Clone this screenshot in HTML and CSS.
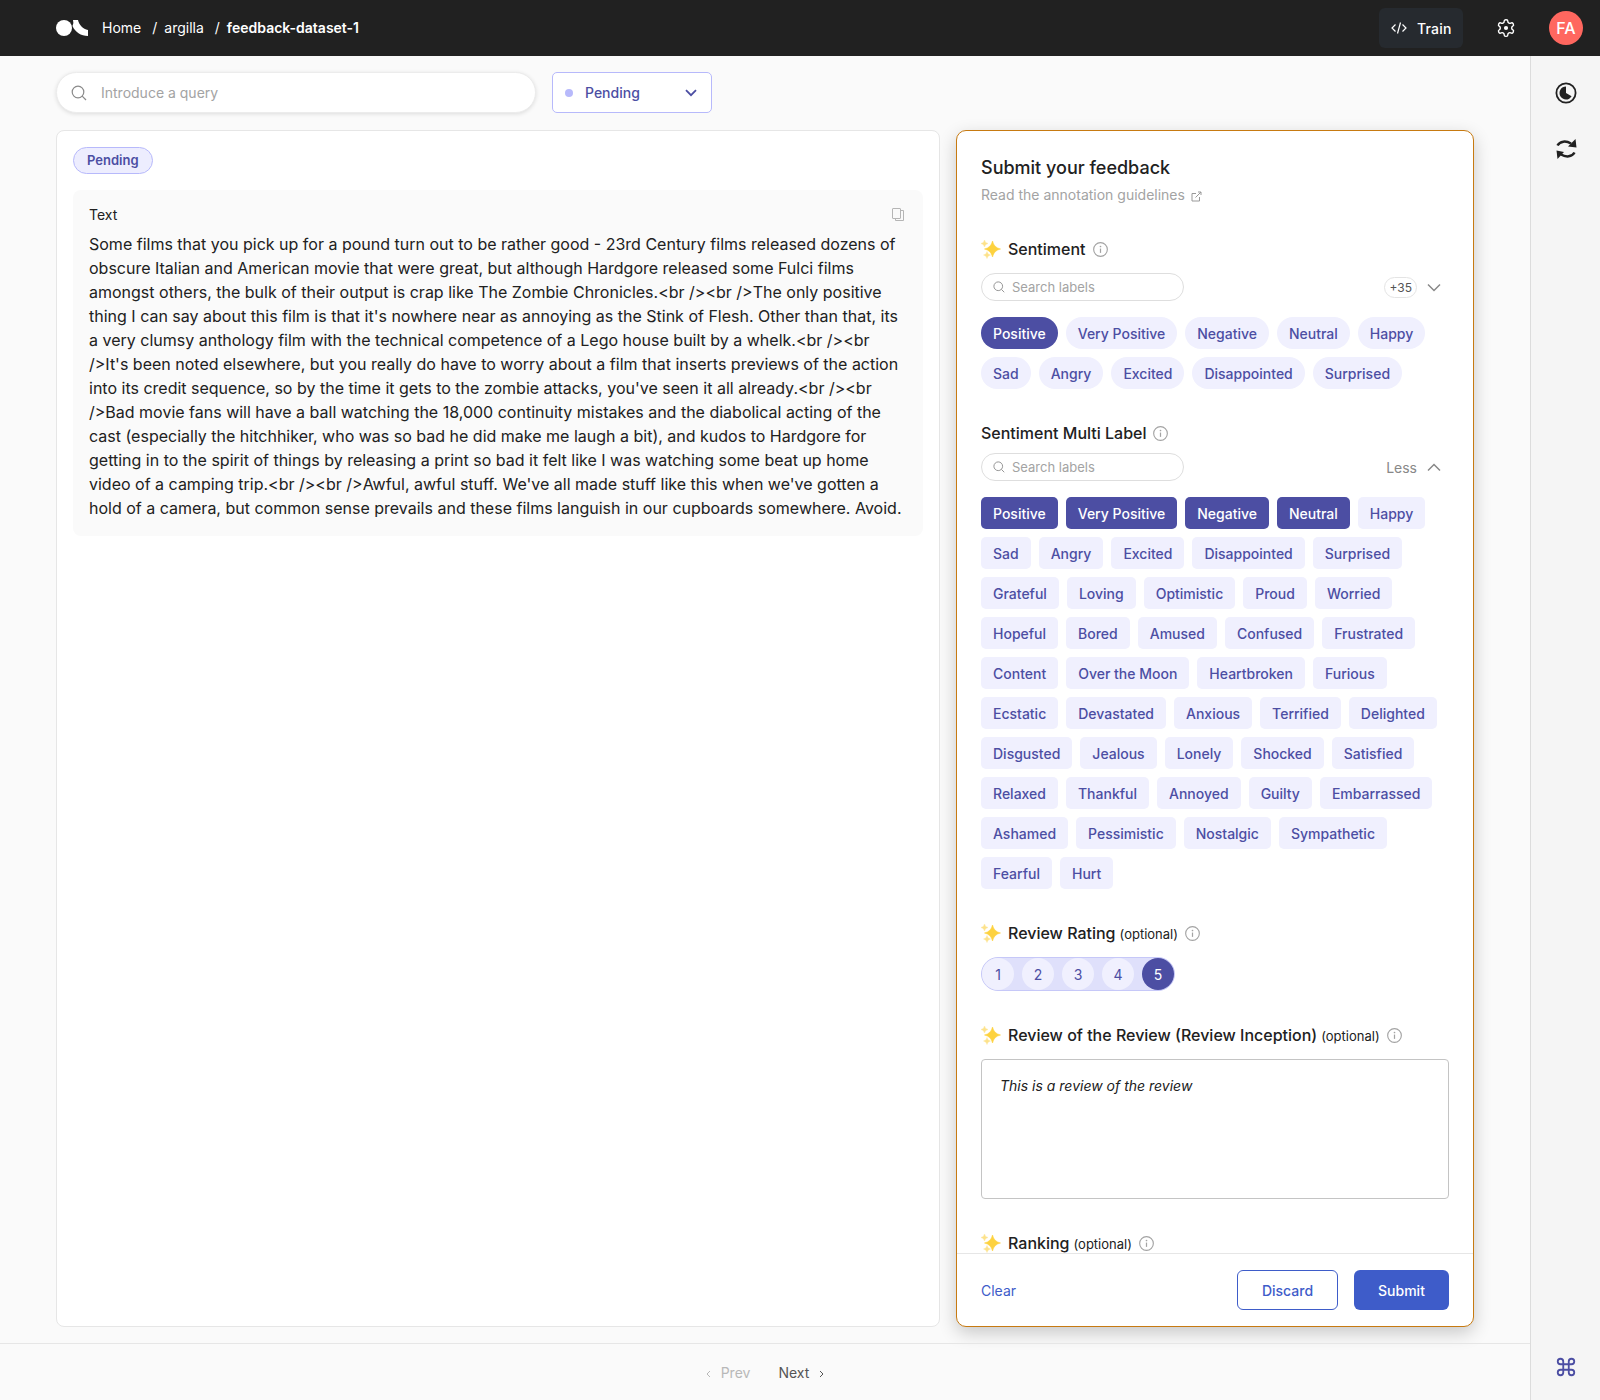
FILE: index.html
```html
<!DOCTYPE html>
<html lang="en">
<head>
    <meta charset="UTF-8">
    <title>feedback-dataset-1</title>
    <link rel="stylesheet" href="styles.css">
</head>
<body>
    <svg class="defs" width="0" height="0">
        <defs>
            <symbol id="sparkle" viewBox="0 0 20 20">
                <path d="M11.500 2Q12.900 8.600 19.500 10Q12.900 11.400 11.500 18Q10.100 11.400 3.500 10Q10.100 8.600 11.500 2z" fill="#fdd23f" stroke="#fdd23f" stroke-width=".6"/>
                <path d="M3.500 1Q4 4 7 4.500Q4 5 3.500 8Q3 5 0 4.500Q3 4 3.500 1z" fill="#fde28a" stroke="#fde28a" stroke-width=".4"/>
                <path d="M6 12.500Q6.500 15.500 9.500 16Q6.500 16.500 6 19.500Q5.500 16.500 2.500 16Q5.500 15.500 6 12.500z" fill="#fde28a" stroke="#fde28a" stroke-width=".4"/>
            </symbol>
            <symbol id="info" viewBox="0 0 16 16">
                <circle cx="8" cy="8" r="7.300" fill="none" stroke="currentColor" stroke-width="1.200"/>
                <path d="M8 7v4.600" stroke="currentColor" stroke-width="1.300"/>
                <circle cx="8" cy="4.800" r=".9" fill="currentColor"/>
            </symbol>
            <symbol id="search" viewBox="0 0 16 16">
                <circle cx="7" cy="7" r="5.800" fill="none" stroke="currentColor" stroke-width="1.200"/>
                <path d="M11.200 11.200l3.800 3.800" stroke="currentColor" stroke-width="1.200"/>
            </symbol>
        </defs>
    </svg>

    <div class="app">
        <header class="topbar">
            <svg class="logo" width="32" height="16" viewBox="0 0 32 16">
                <circle cx="8" cy="8" r="8" fill="#fff"/>
                <path d="M17 0h5C23 5 27 9 32 10V16C25 16 19 12 16.500 6Q18 3 17 0z" fill="#fff"/>
            </svg>
            <nav class="crumbs">
                <span>Home</span>
                <span class="crumb-sep">/</span>
                <span>argilla</span>
                <span class="crumb-sep">/</span>
                <strong>feedback-dataset-1</strong>
            </nav>
            <div class="topbar-right">
                <button class="train-btn">
                    <svg width="16" height="16" viewBox="0 0 16 16" fill="none" stroke="#fff" stroke-width="1.200">
                        <path d="M4.500 4.500L1 8l3.500 3.500M11.500 4.500L15 8l-3.500 3.500M9.500 2.500l-3 11"/>
                    </svg>
                    Train
                </button>
                <svg class="gear" width="20" height="20" viewBox="0 0 24 24" fill="none" stroke="#fff" stroke-width="1.700">
                    <path d="M12.220 2h-.44a2 2 0 0 0-2 2v.18a2 2 0 0 1-1 1.730l-.43.25a2 2 0 0 1-2 0l-.15-.08a2 2 0 0 0-2.730.73l-.22.38a2 2 0 0 0 .73 2.730l.15.1a2 2 0 0 1 1 1.720v.51a2 2 0 0 1-1 1.740l-.15.09a2 2 0 0 0-.73 2.730l.22.38a2 2 0 0 0 2.730.73l.15-.08a2 2 0 0 1 2 0l.43.25a2 2 0 0 1 1 1.730V20a2 2 0 0 0 2 2h.44a2 2 0 0 0 2-2v-.18a2 2 0 0 1 1-1.730l.43-.25a2 2 0 0 1 2 0l.15.08a2 2 0 0 0 2.730-.73l.22-.39a2 2 0 0 0-.73-2.730l-.15-.08a2 2 0 0 1-1-1.740v-.5a2 2 0 0 1 1-1.740l.15-.09a2 2 0 0 0 .73-2.730l-.22-.38a2 2 0 0 0-2.730-.73l-.15.08a2 2 0 0 1-2 0l-.43-.25a2 2 0 0 1-1-1.730V4a2 2 0 0 0-2-2z"/>
                    <circle cx="12" cy="12" r="2.500" fill="#fff" stroke="none"/>
                </svg>
                <div class="avatar">FA</div>
            </div>
        </header>

        <div class="workspace">
            <main class="main">
                <div class="toolbar">
                    <div class="query">
                        <svg class="query-icon" width="16" height="16"><use href="#search"/></svg>
                        <span>Introduce a query</span>
                    </div>
                    <div class="status-select">
                        <span class="status-dot"></span>
                        <span class="status-name">Pending</span>
                        <svg width="12" height="8" viewBox="0 0 12 8" fill="none" stroke="#4c4ea3" stroke-width="1.800"><path d="M1 1.200l5 5 5-5"/></svg>
                    </div>
                </div>

                <div class="content">
                    <section class="record">
                        <span class="badge">Pending</span>
                        <div class="field">
                            <div class="field-head">
                                <span>Text</span>
                                <svg width="14" height="15" viewBox="0 0 14 15" fill="none" stroke="#b5b5b5" stroke-width="1">
                                    <rect x="1.500" y="1.500" width="8" height="10" rx=".5"/>
                                    <path d="M10 3.500h2.500v10h-8v-2"/>
                                </svg>
                            </div>
                            <p class="field-text">Some films that you pick up for a pound turn out to be rather good - 23rd Century films released dozens of obscure Italian and American movie that were great, but although Hardgore released some Fulci films amongst others, the bulk of their output is crap like The Zombie Chronicles.&lt;br /&gt;&lt;br /&gt;The only positive thing I can say about this film is that it's nowhere near as annoying as the Stink of Flesh. Other than that, its a very clumsy anthology film with the technical competence of a Lego house built by a whelk.&lt;br /&gt;&lt;br /&gt;It's been noted elsewhere, but you really do have to worry about a film that inserts previews of the action into its credit sequence, so by the time it gets to the zombie attacks, you've seen it all already.&lt;br /&gt;&lt;br /&gt;Bad movie fans will have a ball watching the 18,000 continuity mistakes and the diabolical acting of the cast (especially the hitchhiker, who was so bad he did make me laugh a bit), and kudos to Hardgore for getting in to the spirit of things by releasing a print so bad it felt like I was watching some beat up home video of a camping trip.&lt;br /&gt;&lt;br /&gt;Awful, awful stuff. We've all made stuff like this when we've gotten a hold of a camera, but common sense prevails and these films languish in our cupboards somewhere. Avoid.</p>
                        </div>
                    </section>

                    <aside class="feedback">
                        <div class="feedback-scroll">
                            <h2>Submit your feedback</h2>
                            <p class="guidelines">
                                Read the annotation guidelines
                                <svg width="11" height="11" viewBox="0 0 11 11" fill="none" stroke="#999" stroke-width="1"><path d="M5 2.500H1v7.500h7.500V6M4.500 6.500L10 1M7 1h3v3"/></svg>
                            </p>

                            <div class="question">
                                <div class="q-title">
                                    <svg class="spark" width="20" height="20"><use href="#sparkle"/></svg>
                                    <span>Sentiment</span>
                                    <svg class="q-info" width="15" height="15"><use href="#info"/></svg>
                                </div>
                                <div class="q-search">
                                    <div class="label-search">
                                        <svg width="12" height="12"><use href="#search"/></svg>
                                        <span>Search labels</span>
                                    </div>
                                    <div class="q-toggle">
                                        <span class="more-count">+35</span>
                                        <svg width="14" height="9" viewBox="0 0 14 9" fill="none" stroke="#888" stroke-width="1.500"><path d="M1 1.500l6 6 6-6"/></svg>
                                    </div>
                                </div>
                                <div class="chips">
                                    <span class="chip chip-on">Positive</span>
                                    <span class="chip">Very Positive</span>
                                    <span class="chip">Negative</span>
                                    <span class="chip">Neutral</span>
                                    <span class="chip">Happy</span>
                                    <span class="chip">Sad</span>
                                    <span class="chip">Angry</span>
                                    <span class="chip">Excited</span>
                                    <span class="chip">Disappointed</span>
                                    <span class="chip">Surprised</span>
                                </div>
                            </div>

                            <div class="question">
                                <div class="q-title q-title-plain">
                                    <span>Sentiment Multi Label</span>
                                    <svg class="q-info" width="15" height="15"><use href="#info"/></svg>
                                </div>
                                <div class="q-search">
                                    <div class="label-search">
                                        <svg width="12" height="12"><use href="#search"/></svg>
                                        <span>Search labels</span>
                                    </div>
                                    <div class="q-toggle">
                                        <span class="less">Less</span>
                                        <svg width="14" height="9" viewBox="0 0 14 9" fill="none" stroke="#888" stroke-width="1.500"><path d="M1 7.500l6-6 6 6"/></svg>
                                    </div>
                                </div>
                                <div class="chips chips-square">
                                    <span class="chip chip-on">Positive</span>
                                    <span class="chip chip-on">Very Positive</span>
                                    <span class="chip chip-on">Negative</span>
                                    <span class="chip chip-on">Neutral</span>
                                    <span class="chip">Happy</span>
                                    <span class="chip">Sad</span>
                                    <span class="chip">Angry</span>
                                    <span class="chip">Excited</span>
                                    <span class="chip">Disappointed</span>
                                    <span class="chip">Surprised</span>
                                    <span class="chip">Grateful</span>
                                    <span class="chip">Loving</span>
                                    <span class="chip">Optimistic</span>
                                    <span class="chip">Proud</span>
                                    <span class="chip">Worried</span>
                                    <span class="chip">Hopeful</span>
                                    <span class="chip">Bored</span>
                                    <span class="chip">Amused</span>
                                    <span class="chip">Confused</span>
                                    <span class="chip">Frustrated</span>
                                    <span class="chip">Content</span>
                                    <span class="chip">Over the Moon</span>
                                    <span class="chip">Heartbroken</span>
                                    <span class="chip">Furious</span>
                                    <span class="chip">Ecstatic</span>
                                    <span class="chip">Devastated</span>
                                    <span class="chip">Anxious</span>
                                    <span class="chip">Terrified</span>
                                    <span class="chip">Delighted</span>
                                    <span class="chip">Disgusted</span>
                                    <span class="chip">Jealous</span>
                                    <span class="chip">Lonely</span>
                                    <span class="chip">Shocked</span>
                                    <span class="chip">Satisfied</span>
                                    <span class="chip">Relaxed</span>
                                    <span class="chip">Thankful</span>
                                    <span class="chip">Annoyed</span>
                                    <span class="chip">Guilty</span>
                                    <span class="chip">Embarrassed</span>
                                    <span class="chip">Ashamed</span>
                                    <span class="chip">Pessimistic</span>
                                    <span class="chip">Nostalgic</span>
                                    <span class="chip">Sympathetic</span>
                                    <span class="chip">Fearful</span>
                                    <span class="chip">Hurt</span>
                                </div>
                            </div>

                            <div class="question">
                                <div class="q-title">
                                    <svg class="spark" width="20" height="20"><use href="#sparkle"/></svg>
                                    <span>Review Rating</span>
                                    <small>(optional)</small>
                                    <svg class="q-info" width="15" height="15"><use href="#info"/></svg>
                                </div>
                                <div class="rating">
                                    <span class="rate">1</span>
                                    <span class="rate">2</span>
                                    <span class="rate">3</span>
                                    <span class="rate">4</span>
                                    <span class="rate rate-on">5</span>
                                </div>
                            </div>

                            <div class="question">
                                <div class="q-title">
                                    <svg class="spark" width="20" height="20"><use href="#sparkle"/></svg>
                                    <span>Review of the Review (Review Inception)</span>
                                    <small>(optional)</small>
                                    <svg class="q-info" width="15" height="15"><use href="#info"/></svg>
                                </div>
                                <div class="review-box">This is a review of the review</div>
                            </div>

                            <div class="question">
                                <div class="q-title">
                                    <svg class="spark" width="20" height="20"><use href="#sparkle"/></svg>
                                    <span>Ranking</span>
                                    <small>(optional)</small>
                                    <svg class="q-info" width="15" height="15"><use href="#info"/></svg>
                                </div>
                            </div>
                        </div>
                        <div class="feedback-foot">
                            <span class="clear">Clear</span>
                            <div class="foot-actions">
                                <button class="btn btn-outline">Discard</button>
                                <button class="btn btn-solid">Submit</button>
                            </div>
                        </div>
                    </aside>
                </div>

                <footer class="pager">
                    <span class="pager-prev">
                        <svg width="5" height="8" viewBox="0 0 5 8" fill="none" stroke="currentColor"><path d="M4 1L1 4l3 3"/></svg>
                        Prev
                    </span>
                    <span class="pager-next">
                        Next
                        <svg width="5" height="8" viewBox="0 0 5 8" fill="none" stroke="currentColor"><path d="M1 1l3 3-3 3"/></svg>
                    </span>
                </footer>
            </main>

            <aside class="sidebar">
                <svg width="22" height="22" viewBox="0 0 22 22">
                    <circle cx="11" cy="11" r="9.600" fill="none" stroke="#212121" stroke-width="1.800"/>
                    <path d="M11 4.500a6.500 6.500 0 1 0 5.600 9.800L11 11z" fill="#212121"/>
                </svg>
                <svg width="22" height="22" viewBox="0 0 22 22" fill="none" stroke="#212121" stroke-width="2.500">
                    <path d="M2.500 7.500C5 3 11 2.500 16 5.500"/>
                    <path d="M20.500 1L21.500 9.500l-8.500-1z" fill="#212121" stroke="none"/>
                    <path d="M19.500 14.500C17 19 11 19.500 6 16.500"/>
                    <path d="M1.500 12.500l7.500 1.500-6.500 7z" fill="#212121" stroke="none"/>
                </svg>
                <svg class="side-cmd" width="22" height="22" viewBox="0 0 24 24" fill="none" stroke="#4c4ea3" stroke-width="2">
                    <path d="M15 6v12a3 3 0 1 0 3-3H6a3 3 0 1 0 3 3V6a3 3 0 1 0-3 3h12a3 3 0 1 0-3-3"/>
                </svg>
            </aside>
        </div>
    </div>
</body>
</html>
```

FILE: styles.css
```css
* {
    box-sizing: border-box;
}

body {
    margin: 0;
    font-family: Inter, "Liberation Sans", sans-serif;
    color: #212121;
    background: #fafafa;
}

.defs {
    position: absolute;
}

.app {
    display: flex;
    flex-direction: column;
    height: 1400px;
}

/* barra superior */
.topbar {
    flex: none;
    display: flex;
    align-items: center;
    height: 56px;
    padding-left: 56px;
    padding-right: 17px;
    background: #212121;
    color: #fff;
    font-size: 14px;
}

.crumbs {
    display: flex;
    align-items: center;
    margin-left: 14px;
    margin-top: -1px;
}

.crumb-sep {
    margin-left: 11px;
    margin-right: 7px;
}

.crumbs strong {
    font-weight: 600;
}

.topbar-right {
    display: flex;
    align-items: center;
    margin-left: auto;
}

.train-btn {
    display: flex;
    align-items: center;
    gap: 10px;
    width: 84px;
    height: 40px;
    padding: 0 0 0 12px;
    border: 0;
    border-radius: 6px;
    background: #262a2f;
    color: #fff;
    font-family: inherit;
    font-size: 14px;
    font-weight: 500;
    letter-spacing: .2px;
}

.gear {
    margin-left: 33px;
}

.avatar {
    display: flex;
    align-items: center;
    justify-content: center;
    width: 34px;
    height: 34px;
    margin-left: 33px;
    border-radius: 50%;
    background: #ff675f;
    font-size: 16px;
    font-weight: 500;
}

.workspace {
    flex: 1;
    display: flex;
    min-height: 0;
}

.main {
    flex: 1;
    display: flex;
    flex-direction: column;
    min-width: 0;
}

/* busca e filtro */
.toolbar {
    display: flex;
    gap: 16px;
    padding: 16px 56px 17px;
}

.query {
    display: flex;
    align-items: center;
    width: 480px;
    height: 41px;
    padding-left: 14px;
    border: 1px solid #ececec;
    border-radius: 21px;
    background: #fff;
    box-shadow: 0 1px 4px rgba(0, 0, 0, .12);
    color: #a3a3a3;
    font-size: 14px;
}

.query-icon {
    margin-right: 14px;
    color: #8a8a8a;
}

.status-select {
    display: flex;
    align-items: center;
    width: 160px;
    height: 41px;
    padding: 0 14px 0 12px;
    border: 1px solid #b7b9fb;
    border-radius: 5px;
    background: #fff;
    color: #4c4ea3;
    font-size: 14px;
    font-weight: 500;
}

.status-dot {
    width: 8px;
    height: 8px;
    border-radius: 50%;
    background: #b7b9fb;
}

.status-name {
    flex: 1;
    margin-left: 12px;
}

.content {
    flex: 1;
    display: flex;
    gap: 16px;
    min-height: 0;
    padding: 0 56px 16px;
}

/* registro */
.record {
    flex: 1;
    padding: 16px;
    border: 1px solid #e6e6e6;
    border-radius: 8px;
    background: #fff;
}

.badge {
    display: inline-flex;
    align-items: center;
    height: 27px;
    padding: 0 13px 1px;
    border: 1px solid #b7b9fb;
    border-radius: 14px;
    background: #ededfe;
    color: #4c4ea3;
    font-size: 13px;
    font-weight: 600;
}

.field {
    margin-top: 16px;
    padding: 16px;
    border-radius: 8px;
    background: #fafafa;
}

.field-head {
    display: flex;
    align-items: center;
    justify-content: space-between;
    height: 17px;
    padding-right: 2px;
    font-size: 14px;
}

.field-text {
    margin: 9px 0 0;
    font-size: 16px;
    line-height: 24px;
}

/* formulário */
.feedback {
    flex: none;
    display: flex;
    flex-direction: column;
    width: 518px;
    border: 1px solid #c77a11;
    border-radius: 10px;
    background: #fff;
    box-shadow: 0 6px 18px rgba(0, 0, 0, .2);
}

.feedback-scroll {
    flex: 1;
    min-height: 0;
    overflow: hidden;
    padding: 24px 24px 0;
}

.feedback h2 {
    margin: 0;
    font-size: 18px;
    font-weight: 450;
    line-height: 26px;
}

.guidelines {
    margin: 4px 0 0;
    color: #a3a3a3;
    font-size: 14px;
    line-height: 20px;
}

.guidelines svg {
    margin-left: 2px;
    position: relative;
    top: 2px;
}

.question {
    margin-top: 28px;
}

.q-title {
    display: flex;
    align-items: center;
    height: 32px;
    font-size: 16px;
    font-weight: 450;
}

.q-title-plain {
    margin-bottom: -4px;
}

.q-title small {
    margin-top: 2px;
    margin-left: 4px;
    font-size: 13px;
    font-weight: 400;
}

.spark {
    flex: none;
    margin-right: 7px;
}

.q-info {
    flex: none;
    margin-left: 7px;
    color: #a3a3a3;
}

.q-search {
    display: flex;
    align-items: center;
    justify-content: space-between;
    margin-top: 8px;
}

.label-search {
    display: flex;
    align-items: center;
    gap: 7px;
    width: 203px;
    height: 28px;
    padding-left: 11px;
    border: 1px solid #dedede;
    border-radius: 14px;
    color: #a3a3a3;
    font-size: 13px;
}

.label-search svg {
    color: #8a8a8a;
}

.q-toggle {
    display: flex;
    align-items: center;
    gap: 10px;
    padding-right: 8px;
    color: #888;
    font-size: 14px;
}

.more-count {
    padding: 2px 4px;
    border: 1px solid #e4e4e4;
    border-radius: 11px;
    color: #555;
    font-size: 12px;
}

.chips {
    display: flex;
    flex-wrap: wrap;
    gap: 8px;
    margin-top: 16px;
}

.chip {
    display: flex;
    align-items: center;
    height: 32px;
    padding: 0 12px;
    border-radius: 16px;
    background: #f0f0fe;
    color: #4c4ea3;
    font-size: 14px;
    font-weight: 450;
}

.chips-square .chip {
    border-radius: 5px;
}

.chip-on {
    background: #4c4ea3;
    color: #fff;
}

.rating {
    display: inline-flex;
    gap: 8px;
    margin-top: 8px;
    border-radius: 17px;
    border: 1px solid #c6c8f8;
    background: #dfe0fb;
}

.rate {
    display: flex;
    align-items: center;
    justify-content: center;
    width: 32px;
    height: 32px;
    border-radius: 50%;
    background: #f0f0fe;
    color: #4c4ea3;
    font-size: 14px;
}

.rate-on {
    background: #4c4ea3;
    color: #fff;
}

.review-box {
    height: 140px;
    margin-top: 8px;
    padding: 17px 18px;
    border: 1px solid #c4c4c4;
    border-radius: 4px;
    font-size: 14px;
    font-style: italic;
}

.feedback-foot {
    flex: none;
    display: flex;
    align-items: center;
    justify-content: space-between;
    height: 73px;
    padding: 0 24px;
    border-top: 1px solid #e6e6e6;
}

.clear {
    color: #3e5cc9;
    font-size: 14px;
}

.foot-actions {
    display: flex;
    gap: 16px;
}

.btn {
    height: 40px;
    border-radius: 6px;
    font-family: inherit;
    font-size: 14px;
    font-weight: 500;
}

.btn-outline {
    width: 101px;
    border: 1px solid #3e5cc9;
    background: #fff;
    color: #3e5cc9;
}

.btn-solid {
    width: 95px;
    border: 0;
    background: #3e5cc9;
    color: #fff;
}

/* paginação */
.pager {
    flex: none;
    display: flex;
    align-items: center;
    justify-content: center;
    gap: 28px;
    height: 57px;
    border-top: 1px solid #e6e6e6;
    font-size: 14px;
}

.pager-prev {
    color: #b8b8b8;
}

.pager-next {
    color: #555;
}

.pager svg {
    margin: 0 6px;
}

/* barra lateral */
.sidebar {
    flex: none;
    display: flex;
    flex-direction: column;
    align-items: center;
    gap: 34px;
    width: 70px;
    padding-top: 26px;
    padding-bottom: 22px;
    border-left: 1px solid #dcdcdc;
    background: #f5f5f5;
}

.side-cmd {
    margin-top: auto;
}
```
